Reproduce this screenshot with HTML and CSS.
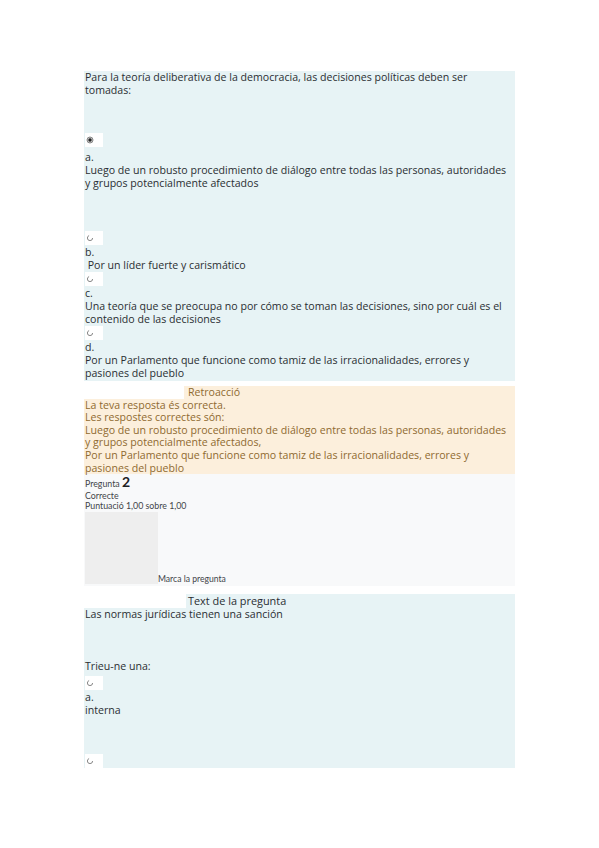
FILE: index.html
```html
<!DOCTYPE html>
<html lang="es">
<head>
<meta charset="utf-8">
<title>Pregunta</title>
<link rel="stylesheet" href="styles.css">
</head>
<body>
<div class="page">
  <section class="q q1">
    <div class="qtext">Para la teoría deliberativa de la democracia, las decisiones políticas deben ser<br>tomadas:</div>
    <div class="opt opt-a">
      <span class="radio"><svg width="8" height="8" viewBox="0 0 8 8"><circle cx="4" cy="4" r="3" fill="#cfcfcf" stroke="#888" stroke-width="1"/><circle cx="4" cy="4" r="1.7" fill="#222"/></svg></span>
      <div class="num">a.</div>
      <div class="txt">Luego de un robusto procedimiento de diálogo entre todas las personas, autoridades<br>y grupos potencialmente afectados</div>
    </div>
    <div class="opt">
      <span class="radio"><svg width="8" height="8" viewBox="0 0 8 8"><circle cx="4" cy="4" r="2.6" fill="none" stroke="#888" stroke-width="1" stroke-dasharray="11 5"/></svg></span>
      <div class="num">b.</div>
      <div class="txt">&nbsp;Por un líder fuerte y carismático</div>
    </div>
    <div class="opt">
      <span class="radio"><svg width="8" height="8" viewBox="0 0 8 8"><circle cx="4" cy="4" r="2.6" fill="none" stroke="#888" stroke-width="1" stroke-dasharray="11 5"/></svg></span>
      <div class="num">c.</div>
      <div class="txt">Una teoría que se preocupa no por cómo se toman las decisiones, sino por cuál es el<br>contenido de las decisiones</div>
    </div>
    <div class="opt">
      <span class="radio"><svg width="8" height="8" viewBox="0 0 8 8"><circle cx="4" cy="4" r="2.6" fill="none" stroke="#888" stroke-width="1" stroke-dasharray="11 5"/></svg></span>
      <div class="num">d.</div>
      <div class="txt">Por un Parlamento que funcione como tamiz de las irracionalidades, errores y<br>pasiones del pueblo</div>
    </div>
  </section>

  <section class="feedback">
    <div class="fb-head">Retroacció</div>
    <div class="fb-body">
      <div>La teva resposta és correcta.</div>
      <div>Les respostes correctes són:</div>
      <div>Luego de un robusto procedimiento de diálogo entre todas las personas, autoridades<br>y grupos potencialmente afectados,</div>
      <div>Por un Parlamento que funcione como tamiz de las irracionalidades, errores y<br>pasiones del pueblo</div>
    </div>
  </section>

  <section class="info">
    <div class="info-no">Pregunta <span class="qno">2</span></div>
    <div class="info-line">Correcte</div>
    <div class="info-line">Puntuació 1,00 sobre 1,00</div>
    <div class="flag-row">
      <span class="flag-box"></span>
      <span class="flag-text">Marca la pregunta</span>
    </div>
  </section>

  <section class="q2wrap">
    <div class="q2-head">Text de la pregunta</div>
    <div class="q q2">
      <div class="qtext">Las normas jurídicas tienen una sanción</div>
      <div class="prompt">Trieu-ne una:</div>
      <div class="opt opt-a2">
        <span class="radio"><svg width="8" height="8" viewBox="0 0 8 8"><circle cx="4" cy="4" r="2.6" fill="none" stroke="#888" stroke-width="1" stroke-dasharray="11 5"/></svg></span>
        <div class="num">a.</div>
        <div class="txt">interna</div>
      </div>
      <div class="opt opt-last">
        <span class="radio"><svg width="8" height="8" viewBox="0 0 8 8"><circle cx="4" cy="4" r="2.6" fill="none" stroke="#888" stroke-width="1" stroke-dasharray="11 5"/></svg></span>
      </div>
    </div>
  </section>
</div>
</body>
</html>
```

FILE: styles.css
```css
html, body {
  margin: 0;
  padding: 0;
  background: #ffffff;
}

body {
  font-family: "Open Sans", "DejaVu Sans", sans-serif;
  font-size: 10.6px;
  line-height: 13px;
  color: #2a2e32;
}

.page {
  width: 431px;
  margin-left: 84px;
  padding-top: 71px;
}

.q {
  background: #e7f3f5;
  padding-left: 1px;
}

.qtext {
  margin-bottom: 36px;
}

.radio {
  display: flex;
  align-items: center;
  width: 18px;
  height: 14px;
  background: #ffffff;
  padding-left: 1px;
  box-sizing: border-box;
  margin-bottom: 1px;
}

.radio svg {
  display: block;
}

.opt-a .radio {
  margin-bottom: 4px;
}

.opt-a {
  margin-bottom: 41px;
}

.q1 {
  padding-bottom: 1px;
}

.feedback {
  margin-top: 5px;
  color: #8f6a30;
  line-height: 12.6px;
}

.fb-head {
  margin-left: 100px;
  padding-left: 4px;
  background: #fcefdc;
}

.fb-body {
  background: #fcefdc;
  padding-left: 1px;
}

.info {
  background: #f8f9fa;
  color: #3f4449;
  font-family: "Lato", "Open Sans", sans-serif;
  font-size: 8.8px;
  line-height: 10px;
  padding-top: 1px;
  padding-bottom: 2px;
  padding-left: 1px;
}

.info-no {
  line-height: 14px;
}

.qno {
  font-size: 14px;
  font-weight: 700;
  color: #1d2125;
}

.flag-row {
  display: flex;
  align-items: flex-end;
  margin-top: 1px;
}

.flag-box {
  display: block;
  width: 73px;
  height: 72px;
  background: #eeeeee;
}

.flag-text {
  line-height: 9px;
  font-size: 8.6px;
}

.q2wrap {
  margin-top: 8px;
}

.q2-head {
  margin-left: 102px;
  padding-left: 2px;
  background: #e7f3f5;
  font-size: 10.9px;
  line-height: 14px;
}

.q2 .qtext {
  margin-bottom: 39px;
}

.prompt {
  margin-bottom: 3px;
}

.opt-a2 {
  margin-bottom: 37px;
}

.opt-last .radio {
  margin-bottom: 0;
}
```
